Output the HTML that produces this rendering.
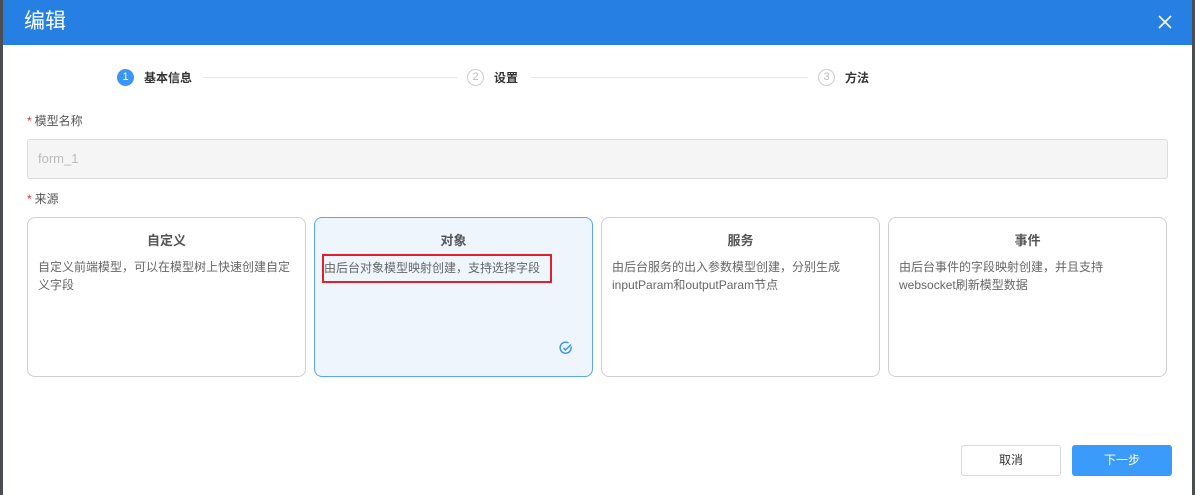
<!DOCTYPE html>
<html><head><meta charset="utf-8"><style>
*{margin:0;padding:0;box-sizing:border-box}
body{width:1195px;height:495px;overflow:hidden;background:#4a4d52;font-family:"Liberation Sans","Noto Sans CJK SC",sans-serif;position:relative}
.modal{position:absolute;left:3px;top:0;width:1189px;height:495px;background:#fff}
.hd{height:45px;background:#2680e3;color:#fff;font-size:21px;line-height:43px;padding-left:21px;position:relative}
.x{position:absolute;right:18px;top:13px;width:18px;height:18px}
.step{position:absolute;top:69px;height:17px;display:flex;align-items:center;font-size:12px;font-weight:bold;color:#333}
.c{width:17px;height:17px;border-radius:50%;font-size:11px;text-align:center;line-height:15px;margin-right:10px;font-weight:normal}
.line{position:absolute;top:77px;height:1px;background:#e4e4e4}
.lbl{position:absolute;font-size:12px;color:#555}
.lbl b{color:#e52b2b;font-weight:normal;margin-right:3px}
.inp{position:absolute;left:24px;top:139px;width:1141px;height:40px;background:#f5f5f5;border:1px solid #dcdcdc;border-radius:3px;color:#bbb;font-size:13px;line-height:38px;padding-left:10px}
.card{position:absolute;top:217px;width:279px;height:160px;border:1px solid #cfcfcf;border-radius:8px;padding:0 10px}
.card h4{text-align:center;font-size:13px;color:#555;margin-top:12px;margin-bottom:9px}
.card p{font-size:12px;color:#666;line-height:18px}
.sel{background:#eef5fd;border-color:#5aa5f5}
.btn{position:absolute;top:445px;height:31px;border-radius:3px;font-size:12px;text-align:center;line-height:29px}
</style></head><body>
<div class="modal">
<div class="hd">编辑<svg class="x" viewBox="0 0 18 18"><path d="M3 3L15 15M15 3L3 15" stroke="#fff" stroke-width="1.6"/></svg></div>
<div class="step" style="left:114px"><div class="c" style="background:#3a96f5;color:#fff;border:1px solid #3a96f5">1</div>基本信息</div>
<div class="line" style="left:200px;width:254px"></div>
<div class="step" style="left:464px"><div class="c" style="border:1px solid #ccc;color:#bbb">2</div>设置</div>
<div class="line" style="left:528px;width:277px"></div>
<div class="step" style="left:815px"><div class="c" style="border:1px solid #ccc;color:#bbb">3</div>方法</div>
<div class="lbl" style="left:24px;top:112px"><b>*</b>模型名称</div>
<div class="inp">form_1</div>
<div class="lbl" style="left:24px;top:190px"><b>*</b>来源</div>
<div class="card" style="left:24px"><h4>自定义</h4><p>自定义前端模型，可以在模型树上快速创建自定义字段</p></div>
<div class="card sel" style="left:311px"><h4>对象</h4><p><span style="display:inline-block;border:2px solid #e0202a;margin-left:-3px;margin-top:-4px;padding:3px 10px 4px 0">由后台对象模型映射创建，支持选择字段</span></p>
<svg style="position:absolute;left:244px;top:123px" width="14" height="14" viewBox="0 0 14 14"><path d="M12 5.5A5.5 5.5 0 1 1 9.5 2" fill="none" stroke="#3a96f5" stroke-width="1.5"/><path d="M4.5 7L6.5 9 12 3.5" fill="none" stroke="#3a96f5" stroke-width="1.5"/></svg></div>
<div class="card" style="left:598px"><h4>服务</h4><p>由后台服务的出入参数模型创建，分别生成inputParam和outputParam节点</p></div>
<div class="card" style="left:885px"><h4>事件</h4><p>由后台事件的字段映射创建，并且支持<br>websocket刷新模型数据</p></div>
<div class="btn" style="left:958px;width:100px;border:1px solid #d9d9d9;color:#333">取消</div>
<div class="btn" style="left:1069px;width:100px;background:#3a9bfb;color:#fff;border:1px solid #3a9bfb">下一步</div>
</div>
</body></html>
